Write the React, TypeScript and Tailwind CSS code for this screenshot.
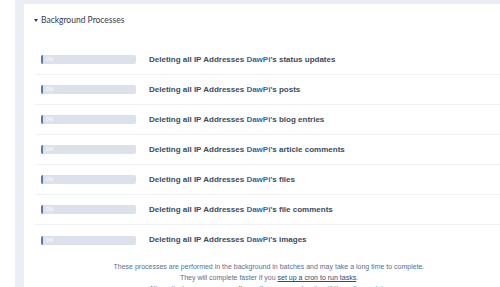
const items = [
  "status updates",
  "posts",
  "blog entries",
  "article comments",
  "files",
  "file comments",
  "images",
];

export default function App() {
  return (
    <div className="w-[500px] h-[287px] overflow-hidden bg-white pl-[15px] font-['Liberation_Sans',Arial,sans-serif]">
      <div className="h-full bg-[#ebeef4] pl-[9px] pt-[4px]">
        <div className="h-full bg-white">
          <div className="flex items-center h-[32px] pl-[10px] pt-[1px] font-['Lato',sans-serif] text-[8.5px] text-[#333c48]">
            <span className="w-0 h-0 border-l-[2.5px] border-r-[2.5px] border-t-[3px] border-l-transparent border-r-transparent border-t-[#333c48] mr-[3px]" />
            Background Processes
          </div>
          <div className="ml-[11px] mt-[9px]">
            {items.map((item, i) => (
              <div
                key={item}
                className={`flex items-center h-[30px] pl-[6px] ${i < items.length - 1 ? "border-b border-[#f1f2f5]" : ""}`}
              >
                <div className="relative w-[95px] h-[9px] rounded-[2px] bg-[#dde1eb] overflow-hidden">
                  <div className="absolute left-0 top-0 h-full w-[2px] bg-[#5a7aa3]" />
                  <span className="absolute left-[5px] top-0 leading-[9px] text-[5px] text-white">0%</span>
                </div>
                <div className="ml-[13px] text-[8px] font-bold text-[#3b4b60]">
                  Deleting all IP Addresses <span className="text-[#2d6aa8]">DawPi</span>'s {item}
                </div>
              </div>
            ))}
          </div>
          <div className="pl-[14px] mt-[6px] text-center text-[7px] leading-[11px] text-[#5b6f8e]">
            <p>These processes are performed in the background in batches and may take a long time to complete.</p>
            <p>
              They will complete faster if you <span className="underline text-[#2c4a78]">set up a cron to run tasks</span>.
            </p>
            <p>
              Alternatively, you can <span className="text-[#2c4a78]">manually run them now</span> and wait until they all complete.
            </p>
          </div>
        </div>
      </div>
    </div>
  );
}
